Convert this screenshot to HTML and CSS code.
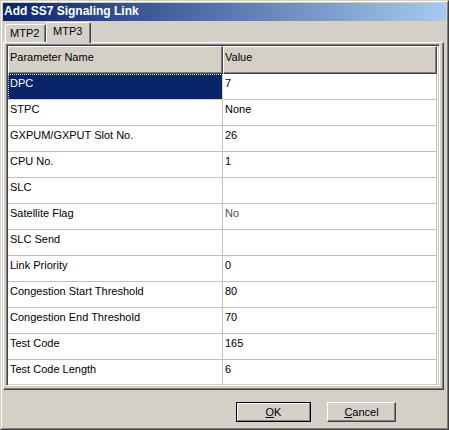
FILE: index.html
```html
<!DOCTYPE html>
<html>
<head>
<meta charset="utf-8">
<link rel="stylesheet" href="styles.css">
</head>
<body>
<div class="window">
  <div class="frame">
    <div class="titlebar"><span class="title">Add SS7 Signaling Link</span></div>
    <div class="tabs">
      <div class="tab tab-mtp2">MTP2</div>
      <div class="tab tab-active">MTP3</div>
    </div>
    <div class="panel">
      <div class="list">
        <div class="row head">
          <div class="hcell">Parameter Name</div>
          <div class="hcell">Value</div>
        </div>
        <div class="row"><div class="cell sel">DPC</div><div class="cell">7</div></div>
        <div class="row"><div class="cell">STPC</div><div class="cell">None</div></div>
        <div class="row"><div class="cell">GXPUM/GXPUT Slot No.</div><div class="cell">26</div></div>
        <div class="row"><div class="cell">CPU No.</div><div class="cell">1</div></div>
        <div class="row"><div class="cell">SLC</div><div class="cell"></div></div>
        <div class="row"><div class="cell">Satellite Flag</div><div class="cell dim">No</div></div>
        <div class="row"><div class="cell">SLC Send</div><div class="cell"></div></div>
        <div class="row"><div class="cell">Link Priority</div><div class="cell">0</div></div>
        <div class="row"><div class="cell">Congestion Start Threshold</div><div class="cell">80</div></div>
        <div class="row"><div class="cell">Congestion End Threshold</div><div class="cell">70</div></div>
        <div class="row"><div class="cell">Test Code</div><div class="cell">165</div></div>
        <div class="row"><div class="cell">Test Code Length</div><div class="cell">6</div></div>
      </div>
    </div>
    <div class="buttons">
      <div class="btn btn-default"><span class="btn-inner"><u>O</u>K</span></div>
      <div class="btn btn-cancel"><span class="btn-inner"><u>C</u>ancel</span></div>
    </div>
  </div>
</div>
</body>
</html>
```
FILE: styles.css
```css
* { box-sizing: border-box; }
html, body { margin: 0; padding: 0; background: #d4d0c8; }
body {
  font-family: "Liberation Sans", Arial, sans-serif;
  font-size: 11px;
  color: #000;
}
.window {
  width: 449px;
  height: 430px;
  border: 1px solid;
  border-color: #d4d0c8 #404040 #404040 #d4d0c8;
  background: #d4d0c8;
}
.frame {
  height: 100%;
  border: 1px solid;
  border-color: #fff #808080 #808080 #fff;
  padding: 1px;
  display: flex;
  flex-direction: column;
}
.titlebar {
  height: 18px;
  flex: none;
  background: linear-gradient(to right, #0a246a 0%, #a6caf0 100%);
  color: #fff;
  font-weight: bold;
  font-size: 12px;
  line-height: 18px;
  padding-left: 1px;
}
.title { display: block; margin-top: -1px; }
.tabs {
  height: 21px;
  flex: none;
  display: flex;
  align-items: flex-end;
  padding-left: 2px;
}
.tab {
  border-top: 1px solid #fff;
  border-left: 1px solid #fff;
  border-right: 1px solid #404040;
  box-shadow: inset -1px 0 0 #808080;
  border-top-left-radius: 2px;
  border-top-right-radius: 2px;
  background: #d4d0c8;
}
.tab-mtp2 {
  width: 41px;
  height: 18px;
  padding: 2px 0 0 4px;
}
.tab-active {
  width: 45px;
  height: 21px;
  padding: 2px 0 0 6px;
  margin-bottom: -1px;
  position: relative;
  z-index: 1;
}
.panel {
  height: 348px;
  flex: none;
  width: 441px;
  border-top: 1px solid #fff;
  border-left: 1px solid #fff;
  border-right: 1px solid #404040;
  border-bottom: 1px solid #404040;
  box-shadow: inset -1px -1px 0 #808080;
  padding: 1px 3px 3px 2px;
}
.list {
  height: 342px;
  border: 1px solid;
  border-color: #808080 #fff #fff #808080;
  box-shadow: inset 1px 1px 0 #404040, inset -1px -1px 0 #d4d0c8;
  background: #fff;
  padding: 1px;
  overflow: hidden;
}
.row {
  display: grid;
  grid-template-columns: 215px 214px;
}
.hcell {
  height: 28px;
  background: #d4d0c8;
  border-top: 1px solid #fff;
  border-left: 1px solid #fff;
  border-right: 1px solid #404040;
  border-bottom: 1px solid #404040;
  box-shadow: inset -1px -1px 0 #808080;
  padding: 4px 0 0 1px;
  white-space: nowrap;
}
.cell {
  height: 26px;
  border-right: 1px solid #c0c0c0;
  border-bottom: 1px solid #c0c0c0;
  padding: 3px 0 0 2px;
  white-space: nowrap;
}
.cell.sel {
  background: #0a246a;
  color: #fff;
  outline: 1px dotted #e8e8a0;
  outline-offset: -1px;
}
.cell.dim { color: #505050; }
.buttons {
  flex: 1;
  display: flex;
  justify-content: flex-end;
  align-items: flex-start;
  gap: 16px;
  padding: 12px 50px 0 0;
}
.btn {
  height: 20px;
  display: flex;
  background: #d4d0c8;
}
.btn-default {
  width: 75px;
  border: 1px solid #000;
}
.btn-cancel {
  width: 69px;
}
.btn-inner {
  flex: 1;
  display: flex;
  align-items: center;
  justify-content: center;
  border: 1px solid;
  border-color: #fff #404040 #404040 #fff;
  box-shadow: inset -1px -1px 0 #808080;
}
.btn-default .btn-inner {
  border-right-color: #808080;
  border-bottom-color: #808080;
  box-shadow: none;
}
u { text-decoration: underline; text-underline-offset: 1px; }
```
